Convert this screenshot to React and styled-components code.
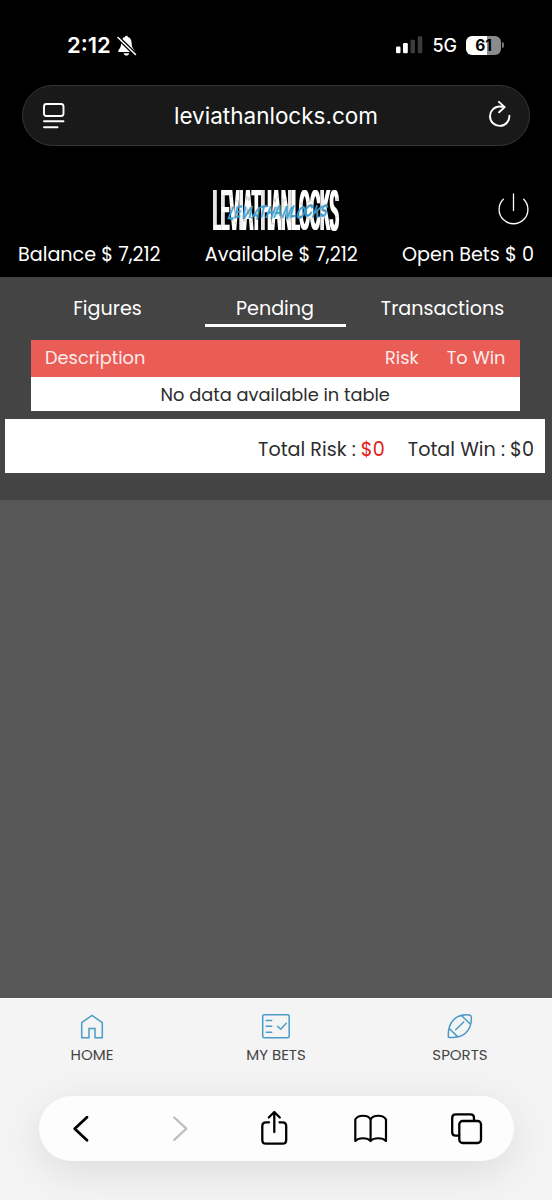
import React from 'react';
import styled, { createGlobalStyle } from 'styled-components';

const GlobalStyle = createGlobalStyle`
    *{
        box-sizing: border-box;
    }
    body{
        margin: 0;
        background: #575757;
        font-family: Poppins, Inter, sans-serif;
    }
`;

const Page = styled.div`
    display: flex;
    flex-direction: column;
    width: 552px;
    height: 1200px;
    overflow: hidden;
    background: #575757;
`;

const Icon = styled.svg`
    display: block;
    flex: none;
    overflow: visible;
    fill: none;
    stroke: ${({color}) => color || '#fff'};
    stroke-width: ${({weight}) => weight || 2};
    stroke-linecap: round;
    stroke-linejoin: round;
`;

const Text = styled.span`
    white-space: nowrap;
    font-size: ${({size}) => size || 19.15}px;
    font-weight: ${({weight}) => weight || 400};
    color: ${({color}) => color || 'inherit'};
`;

const Browser = styled.div`
    height: 176px;
    background: #000;
    color: #fff;
    padding: 0 22px;
    font-family: Inter, sans-serif;
`;

const StatusBar = styled.div`
    display: flex;
    align-items: center;
    justify-content: space-between;
    height: 85px;
    padding: 5px 26px 0 45px;
`;

const StatusGroup = styled.div`
    display: flex;
    align-items: center;
    gap: ${({gap}) => gap}px;
`;

const Battery = styled.div`
    display: flex;
    align-items: center;
    gap: 1px;
`;

const BatteryLevel = styled.div`
    width: 35px;
    height: 19px;
    border-radius: 6px;
    background: linear-gradient(90deg, #fff 61%, #8b8b8b 61%);
    color: #000;
    font-size: 15.5px;
    font-weight: 700;
    line-height: 19px;
    text-align: center;
`;

const BatteryTip = styled.div`
    width: 2px;
    height: 6px;
    border-radius: 0 2px 2px 0;
    background: #777;
`;

const AddressBar = styled.div`
    display: flex;
    align-items: center;
    justify-content: space-between;
    height: 61px;
    padding: 0 17px 0 19px;
    border: 1px solid #353535;
    border-radius: 31px;
    background: #191919;
`;

const Header = styled.header`
    height: 101px;
    background: #000;
    color: #fff;
`;

const Brand = styled.div`
    display: grid;
    grid-template-columns: 1fr 128px 1fr;
    align-items: center;
    height: 66px;
    padding: 0 22px;
`;

const PowerSlot = styled.div`
    justify-self: end;
`;

const Balances = styled.div`
    display: flex;
    justify-content: space-between;
    padding: 0 18px;
    line-height: 26px;
`;

const Panel = styled.main`
    height: 223px;
    background: #444;
    color: #fff;
`;

const Tabs = styled.nav`
    display: grid;
    grid-template-columns: repeat(3, 167.5px);
    justify-content: center;
    justify-items: center;
    height: 63px;
    padding: 12px 2px 0 0;
`;

const Tab = styled.div`
    display: flex;
    justify-content: center;
    width: 141px;
    height: 38px;
    line-height: 39px;
    border-bottom: 3px solid ${({active}) => active ? '#fff' : 'transparent'};
`;

const Table = styled.div`
    margin: 0 32.5px 0 31px;
`;

const TableHead = styled.div`
    display: grid;
    grid-template-columns: 1fr auto auto;
    column-gap: 28px;
    height: 37px;
    padding: 0 14px;
    line-height: 36px;
    background: #ea5c56;
    color: #fdecea;
`;

const EmptyRow = styled.div`
    height: 34px;
    line-height: 36px;
    text-align: center;
    background: #fff;
    color: #2d2d2d;
`;

const Totals = styled.div`
    display: flex;
    justify-content: flex-end;
    gap: 23px;
    height: 54px;
    margin: 8px 7px 0 5px;
    padding-right: 11px;
    line-height: 61px;
    background: #fff;
    color: #2d2d2d;
`;

const Footer = styled.footer`
    height: 202px;
    margin-top: auto;
    padding-top: 14px;
    background: #f4f4f4;
    border-top: 1px solid #fff;
    overflow: hidden;
`;

const BottomNav = styled.nav`
    display: grid;
    grid-template-columns: repeat(3, 184px);
    height: 83px;
`;

const NavItem = styled.div`
    display: flex;
    flex-direction: column;
    align-items: center;
    gap: 5px;
    line-height: 22px;
    color: #444;
`;

const Toolbar = styled.div`
    display: flex;
    align-items: center;
    justify-content: space-between;
    height: 65px;
    margin: 0 38.5px;
    padding: 0 26px 0 20px;
    border-radius: 33px;
    background: #fdfdfd;
    box-shadow: 0 10px 44px rgba(0, 0, 0, 0.1);
`;

const Logo=()=>(
    <Icon width="128" height="44" viewBox="213 188 128 44" stroke="none">
        <defs>
            <filter id="widen" x="-2%" y="-10%" width="104%" height="120%">
                <feMorphology operator="dilate" radius="1 0" />
            </filter>
        </defs>
        <g filter="url(#widen)">
            <text transform="translate(214 230.500) scale(.26 1)" textLength="484" lengthAdjust="spacingAndGlyphs"
                fontFamily="Inter" fontWeight="500" fontSize="55" fill="#fff" stroke="none">LEVIATHANLOCKS</text>
        </g>
        <text transform="translate(228 219.500) rotate(-1) skewX(-18)" textLength="99" lengthAdjust="spacingAndGlyphs"
            rotate="8 -8 6 -6 10 -8 6 -10 8 -4 10 -8 6 -6"
            fontFamily="Inter" fontWeight="600" fontSize="16" fill="#3f9fd0" stroke="#3f9fd0" strokeWidth=".5">LEVIATHANLOCKS</text>
    </Icon>
)

const App=()=>{
    return(
        <>
            <GlobalStyle />
            <Page>
                <Browser>
                    <StatusBar>
                        <StatusGroup gap={6}>
                            <Text size={22} weight={600}>2:12</Text>
                            <Icon width="20" height="21" viewBox="117 34 20 21" weight={1.8}>
                                <path fill="#fff" stroke="none" d="M118.200 50c0-1.500 3-2.500 3-8 0-3.800 2-5.500 3.800-5.900a1.400 1.400 0 0 1 2.800 0c1.800.4 3.800 2.100 3.800 5.900 0 5.500 3 6.500 3 8 0 .7-.5 1-1.200 1h-14c-.7 0-1.200-.3-1.200-1zM123.600 52.200h5.600c-.3 1.500-1.400 2.300-2.800 2.300s-2.500-.8-2.800-2.300z" />
                                <path stroke="#000" strokeWidth="4" d="M118 36.500l17.500 17" />
                                <path strokeWidth="1.600" d="M118 36.500l17.500 17" />
                            </Icon>
                        </StatusGroup>
                        <StatusGroup gap={9}>
                            <Icon width="27" height="18" viewBox="396 36 27 18">
                                <rect x="396" y="46.500" width="4.500" height="6.700" rx="1.200" fill="#fff" stroke="none" />
                                <rect x="403" y="43" width="4.800" height="10.200" rx="1.200" fill="#fff" stroke="none" />
                                <rect x="410.500" y="39.700" width="4.500" height="13.500" rx="1.200" fill="#3c3c3c" stroke="none" />
                                <rect x="417.800" y="36.200" width="4.500" height="17" rx="1.200" fill="#3c3c3c" stroke="none" />
                            </Icon>
                            <Text size={18} weight={500}>5G</Text>
                            <Battery>
                                <BatteryLevel>61</BatteryLevel>
                                <BatteryTip />
                            </Battery>
                        </StatusGroup>
                    </StatusBar>
                    <AddressBar>
                        <Icon width="24" height="28" viewBox="42 102 24 28" weight={1.9}>
                            <rect x="44" y="104" width="19.500" height="12" rx="2.500" />
                            <path d="M44 121.300h19.500M44 127.300h13.500" />
                        </Icon>
                        <Text size={22.5}>leviathanlocks.com</Text>
                        <Icon width="26" height="28" viewBox="486 103 26 28" weight={1.9}>
                            <path d="M509.400 116.700a9.700 9.700 0 1 1-9.700-9.200q2.500 0 4.700.6M498.900 102.900l5.800 5.200-5.600 5.200" />
                        </Icon>
                    </AddressBar>
                </Browser>
                <Header>
                    <Brand>
                        <span />
                        <Logo />
                        <PowerSlot>
                            <Icon width="32" height="32" viewBox="498 194 32 32" weight={1.3}>
                                <path d="M503.300 200.200a14.400 14.400 0 1 0 20.400 0M513.500 195v16.500" />
                            </Icon>
                        </PowerSlot>
                    </Brand>
                    <Balances>
                        <Text>Balance $ 7,212</Text>
                        <Text>Available $ 7,212</Text>
                        <Text>Open Bets $ 0</Text>
                    </Balances>
                </Header>
                <Panel>
                    <Tabs>
                        <Tab><Text>Figures</Text></Tab>
                        <Tab active><Text>Pending</Text></Tab>
                        <Tab><Text>Transactions</Text></Tab>
                    </Tabs>
                    <Table>
                        <TableHead>
                            <Text size={17.8}>Description</Text>
                            <Text size={17.8}>Risk</Text>
                            <Text size={17.8}>To Win</Text>
                        </TableHead>
                        <EmptyRow>
                            <Text size={17.8}>No data available in table</Text>
                        </EmptyRow>
                    </Table>
                    <Totals>
                        <Text>Total Risk : <Text color="#e2231a">$0</Text></Text>
                        <Text>Total Win : $0</Text>
                    </Totals>
                </Panel>
                <Footer>
                    <BottomNav>
                        <NavItem>
                            <Icon width="26" height="26" viewBox="78.700 1013 26 26" color="#4a9cc7" weight={1.5}>
                                <path strokeLinejoin="miter" d="M81.400 1022.700l10.300-7.300 10.300 7.300v15.100h-7.300v-9.300h-6v9.300h-7.300z" />
                            </Icon>
                            <Text size={15}>HOME</Text>
                        </NavItem>
                        <NavItem>
                            <Icon width="30" height="26" viewBox="260.500 1013 30 26" color="#4a9cc7" weight={1.5}>
                                <rect x="262.200" y="1014.800" width="26.500" height="23" rx="1.500" />
                                <path d="M265.700 1020.500h5.500M265.700 1026.200h5.500M265.700 1032.300h5.500M277 1026.200l3.200 3 5.500-6" />
                            </Icon>
                            <Text size={15}>MY BETS</Text>
                        </NavItem>
                        <NavItem>
                            <Icon width="26" height="26" viewBox="447 1013 26 26" color="#4a9cc7" weight={1.5}>
                                <path d="M448.400 1037.300c-1-13 5.500-22.400 18-22.500 4.800 0 5 .3 5 4.500-.5 12.500-9 19.500-23 18zM461.700 1015.700l8.800 8.600M449 1028.300l8.700 8.600M455.700 1029.700l8-7.700" />
                            </Icon>
                            <Text size={15}>SPORTS</Text>
                        </NavItem>
                    </BottomNav>
                    <Toolbar>
                        <Icon width="44" height="44" viewBox="59 1107 44 44" color="#000" weight={2.8}>
                            <path d="M87 1117.300l-12.300 11.400 12.300 11.500" />
                        </Icon>
                        <Icon width="44" height="44" viewBox="155 1107 44 44" color="#bfbfc1" weight={2.3}>
                            <path d="M174.300 1117.500l12 11.200-12 11.200" />
                        </Icon>
                        <Icon width="44" height="44" viewBox="251 1106.500 44 44" color="#000" weight={2.3}>
                            <path d="M269 1121.800h-3q-3.700 0-3.700 3.700v14q0 3.700 3.700 3.700h16.500q3.700 0 3.700-3.700v-14q0-3.700-3.700-3.700h-3M274.300 1131.500v-19M268.800 1117l5.500-5.500 5.500 5.500" />
                        </Icon>
                        <Icon width="44" height="44" viewBox="347 1107 44 44" color="#000" weight={2.2}>
                            <path d="M370.600 1119.500c-2.500-5-12.500-5-15.300 0v21.500c3.500-3.700 12-3.700 15.300 0 3.300-3.700 12-3.700 15.400 0v-21.500c-2.800-5-12.900-5-15.400 0zv21.500" />
                        </Icon>
                        <Icon width="44" height="44" viewBox="444 1107 44 44" color="#000" weight={2.3}>
                            <rect x="459.300" y="1121" width="21.700" height="22" rx="3.300" />
                            <path d="M459 1135.700h-3.300q-3.500 0-3.500-3.500v-14.300q0-3.500 3.500-3.500h14.800q3.500 0 3.500 3.500v3" />
                        </Icon>
                    </Toolbar>
                </Footer>
            </Page>
        </>
    )
}
export default App;
